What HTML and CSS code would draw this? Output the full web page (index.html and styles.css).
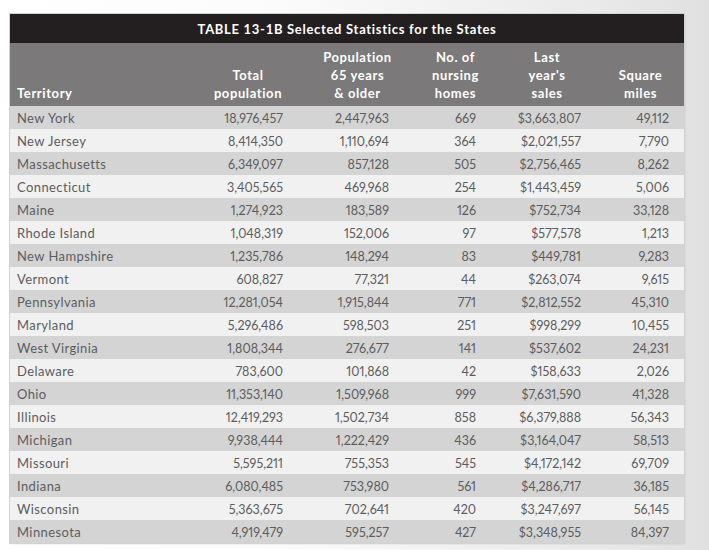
FILE: index.html
```html
<!DOCTYPE html>
<html>
<head>
<meta charset="utf-8">
<link rel="stylesheet" href="styles.css">
</head>
<body>
<div class="frame">
  <div class="title">TABLE 13-1B Selected Statistics for the States</div>
  <table class="stats">
    <colgroup>
      <col class="c-terr"><col class="c-total"><col class="c-pop"><col class="c-nurs"><col class="c-sales"><col class="c-sq">
    </colgroup>
    <thead>
      <tr>
        <th class="h-terr">Territory</th>
        <th>Total<br>population</th>
        <th>Population<br>65 years<br>&amp; older</th>
        <th>No. of<br>nursing<br>homes</th>
        <th>Last<br>year's<br>sales</th>
        <th>Square<br>miles</th>
      </tr>
    </thead>
    <tbody>
      <tr><td>New York</td><td class="n-total">18,976,457</td><td class="n-pop">2,447,963</td><td class="n-nurs">669</td><td class="n-sales">$3,663,807</td><td class="n-sq">49,112</td></tr>
      <tr><td>New Jersey</td><td class="n-total">8,414,350</td><td class="n-pop">1,110,694</td><td class="n-nurs">364</td><td class="n-sales">$2,021,557</td><td class="n-sq">7,790</td></tr>
      <tr><td>Massachusetts</td><td class="n-total">6,349,097</td><td class="n-pop">857,128</td><td class="n-nurs">505</td><td class="n-sales">$2,756,465</td><td class="n-sq">8,262</td></tr>
      <tr><td>Connecticut</td><td class="n-total">3,405,565</td><td class="n-pop">469,968</td><td class="n-nurs">254</td><td class="n-sales">$1,443,459</td><td class="n-sq">5,006</td></tr>
      <tr><td>Maine</td><td class="n-total">1,274,923</td><td class="n-pop">183,589</td><td class="n-nurs">126</td><td class="n-sales">$752,734</td><td class="n-sq">33,128</td></tr>
      <tr><td>Rhode Island</td><td class="n-total">1,048,319</td><td class="n-pop">152,006</td><td class="n-nurs">97</td><td class="n-sales">$577,578</td><td class="n-sq">1,213</td></tr>
      <tr><td>New Hampshire</td><td class="n-total">1,235,786</td><td class="n-pop">148,294</td><td class="n-nurs">83</td><td class="n-sales">$449,781</td><td class="n-sq">9,283</td></tr>
      <tr><td>Vermont</td><td class="n-total">608,827</td><td class="n-pop">77,321</td><td class="n-nurs">44</td><td class="n-sales">$263,074</td><td class="n-sq">9,615</td></tr>
      <tr><td>Pennsylvania</td><td class="n-total">12,281,054</td><td class="n-pop">1,915,844</td><td class="n-nurs">771</td><td class="n-sales">$2,812,552</td><td class="n-sq">45,310</td></tr>
      <tr><td>Maryland</td><td class="n-total">5,296,486</td><td class="n-pop">598,503</td><td class="n-nurs">251</td><td class="n-sales">$998,299</td><td class="n-sq">10,455</td></tr>
      <tr><td>West Virginia</td><td class="n-total">1,808,344</td><td class="n-pop">276,677</td><td class="n-nurs">141</td><td class="n-sales">$537,602</td><td class="n-sq">24,231</td></tr>
      <tr><td>Delaware</td><td class="n-total">783,600</td><td class="n-pop">101,868</td><td class="n-nurs">42</td><td class="n-sales">$158,633</td><td class="n-sq">2,026</td></tr>
      <tr><td>Ohio</td><td class="n-total">11,353,140</td><td class="n-pop">1,509,968</td><td class="n-nurs">999</td><td class="n-sales">$7,631,590</td><td class="n-sq">41,328</td></tr>
      <tr><td>Illinois</td><td class="n-total">12,419,293</td><td class="n-pop">1,502,734</td><td class="n-nurs">858</td><td class="n-sales">$6,379,888</td><td class="n-sq">56,343</td></tr>
      <tr><td>Michigan</td><td class="n-total">9,938,444</td><td class="n-pop">1,222,429</td><td class="n-nurs">436</td><td class="n-sales">$3,164,047</td><td class="n-sq">58,513</td></tr>
      <tr><td>Missouri</td><td class="n-total">5,595,211</td><td class="n-pop">755,353</td><td class="n-nurs">545</td><td class="n-sales">$4,172,142</td><td class="n-sq">69,709</td></tr>
      <tr><td>Indiana</td><td class="n-total">6,080,485</td><td class="n-pop">753,980</td><td class="n-nurs">561</td><td class="n-sales">$4,286,717</td><td class="n-sq">36,185</td></tr>
      <tr><td>Wisconsin</td><td class="n-total">5,363,675</td><td class="n-pop">702,641</td><td class="n-nurs">420</td><td class="n-sales">$3,247,697</td><td class="n-sq">56,145</td></tr>
      <tr><td>Minnesota</td><td class="n-total">4,919,479</td><td class="n-pop">595,257</td><td class="n-nurs">427</td><td class="n-sales">$3,348,955</td><td class="n-sq">84,397</td></tr>
    </tbody>
  </table>
</div>
</body>
</html>
```
FILE: styles.css
```css
html, body {
  margin: 0;
  padding: 0;
}
body {
  width: 709px;
  height: 550px;
  overflow: hidden;
  background: linear-gradient(to right, #ffffff 0%, #fbfbfb 40%, #e9e9e9 85%, #e0e0e0 100%);
  font-family: Lato, "Liberation Sans", sans-serif;
  padding-top: 14px;
  box-sizing: border-box;
}
.frame {
  margin-left: 10px;
  width: 674px;
  box-shadow: 0 0 0 1px #d2d2d2, 1px 1px 2px rgba(0,0,0,0.12);
}
.title {
  height: 29px;
  line-height: 30px;
  background: #231f20;
  color: #ffffff;
  font-weight: 700;
  font-size: 13px;
  letter-spacing: 0.7px;
  text-align: center;
}
.stats {
  width: 674px;
  border-collapse: collapse;
  table-layout: fixed;
}
.c-terr { width: 185px; }
.c-total { width: 106px; }
.c-pop { width: 113px; }
.c-nurs { width: 83px; }
.c-sales { width: 100px; }
.c-sq { width: 87px; }
.stats thead tr {
  background: #7b797a;
  height: 63px;
}
.stats th {
  color: #ffffff;
  font-weight: 700;
  font-size: 13px;
  letter-spacing: 0.6px;
  line-height: 18px;
  vertical-align: bottom;
  text-align: center;
  padding: 0 0 4px 0;
}
.stats th.h-terr {
  text-align: left;
  padding-left: 7px;
}
.stats tbody tr {
  height: 23px;
}
.stats tbody tr:nth-child(odd) {
  background: #d4d4d4;
}
.stats tbody tr:nth-child(even) {
  background: #f1f1f1;
}
.stats td {
  color: #5c5c5e;
  font-size: 13px;
  letter-spacing: 0.4px;
  padding: 1px 0 0 7px;
  white-space: nowrap;
}
.stats td[class^="n-"] {
  font-size: 12.5px;
  letter-spacing: 0;
  font-variant-numeric: proportional-nums;
  text-align: right;
}
.stats td.n-total { padding-right: 18px; }
.stats td.n-pop { padding-right: 25px; }
.stats td.n-nurs { padding-right: 21px; }
.stats td.n-sales { padding-right: 16px; }
.stats td.n-sq { padding-right: 15px; }
```
